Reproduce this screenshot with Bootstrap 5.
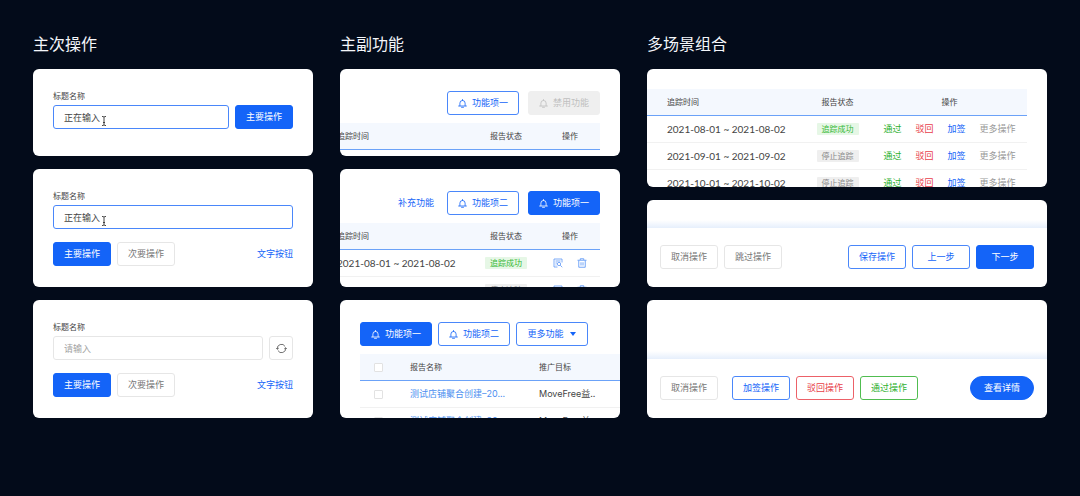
<!DOCTYPE html>
<html lang="zh-CN">
<head>
<meta charset="utf-8">
<meta name="viewport" content="width=device-width, initial-scale=1">
<title>按钮组合</title>
<link rel="stylesheet" href="https://cdn.jsdelivr.net/npm/bootstrap@5.3.0/dist/css/bootstrap.min.css">
<style>
  :root { --blue: #1464f8; --blue-line: #4a87fa; --line: #e6e6e6; --tint: #f4f8fe; }
  body { background: #030b1a; color: #444; font-family: Inter, "Noto Sans CJK SC", sans-serif; font-size: 9px; line-height: 12px; }
  .board { display: grid; grid-template-columns: 7fr 7fr 10fr; gap: 27px; padding: 32px 33px; }
  .board h2 { font-size: 16px; line-height: 24px; font-weight: 400; color: #f4f6fa; margin: 0 0 13px; }
  .stack { display: flex; flex-direction: column; gap: 13px; }
  .board .card { border: 0; border-radius: 6px; overflow: hidden; color: inherit; }
  .tile-s { height: 87px; }
  .tile-l { height: 118px; }
  .form-tile { padding: 21px 20px; }
  .form-tile label { font-size: 8px; line-height: 12px; margin-bottom: 3px; display: block; }
  .form-tile .form-control { height: 24px; min-height: 24px; padding: 0 10px; font-size: 9px; border-color: var(--line); border-radius: 3px; color: #444; }
  .form-tile .form-control::placeholder { color: #a3a3a3; }
  .form-tile .form-control.active { border-color: var(--blue-line); }
  .caret { position: absolute; left: 48px; top: 11px; }
  .gap-6 { gap: 6px; }
  .gap-9 { gap: 9px; }
  .btn { --bs-btn-font-size: 9px; --bs-btn-line-height: 12px; --bs-btn-padding-y: 0; --bs-btn-padding-x: 0; --bs-btn-border-radius: 3px;
    height: 24px; min-width: 58px; flex: none; display: inline-flex; align-items: center; justify-content: center; gap: 5px; }
  .btn-primary { --bs-btn-bg: var(--blue); --bs-btn-border-color: var(--blue); }
  .btn-outline-primary { --bs-btn-color: var(--blue); --bs-btn-border-color: var(--blue-line); }
  .btn-outline-secondary { --bs-btn-color: #777; --bs-btn-border-color: var(--line); }
  .btn-outline-danger { --bs-btn-color: #e8404a; --bs-btn-border-color: #ec6168; }
  .btn-outline-success { --bs-btn-color: #2fb12f; --bs-btn-border-color: #50bd50; }
  .btn-muted { --bs-btn-disabled-color: #bfbfbf; --bs-btn-disabled-bg: #efefef; --bs-btn-disabled-border-color: #efefef; --bs-btn-disabled-opacity: 1; }
  .btn-icon { min-width: 72px; }
  .btn-square { min-width: 24px; width: 24px; }
  .btn-text { min-width: 0; border: 0; color: var(--blue); }
  .btn-pill { min-width: 64px; border-radius: 12px; }
  .toolbar { padding: 22px 20px 8px; }
  .scrolled { display: flex; justify-content: flex-end; padding-right: 20px; }
  .inset-start { padding-left: 20px; }
  .inset-top { padding: 20px 20px 0 0; }
  .grid-table { border-collapse: separate; border-spacing: 0; table-layout: fixed; flex: none; }
  .grid-table th { height: 27px; font-size: 8px; font-weight: 400; background: var(--tint); border-bottom: 1px solid #6ba2f8; padding: 0; }
  .grid-table td { height: 27px; padding: 0; border-bottom: 1px solid #f1f1f1; white-space: nowrap; }
  .grid-table .first-cell { padding-left: 20px; }
  .grid-table .tick-cell { padding-left: 14px; }
  .grid-table .c { text-align: center; }
  .date { font-family: Lato, "Noto Sans CJK SC", sans-serif; font-size: 10px; }
  .tag { display: inline-block; width: 42px; font-size: 8px; line-height: 12px; border-radius: 1px; background: #efefef; color: #888; }
  .tag.ok { background: #e6f7e6; color: #34b834; }
  .ops { display: flex; justify-content: center; gap: 14px; }
  .ops a, .name-link { text-decoration: none; }
  .op-pass { color: #2fb12f; }
  .op-reject { color: #e8404a; }
  .op-sign { color: var(--blue); }
  .op-more { color: #999; }
  .name-link { color: #4c8ff0; }
  .form-check-input.tick { width: 9px; height: 9px; margin: 0; display: block; border: 1px solid #e2e2e2; border-radius: 1px; }
  .act { border: 0; background: none; padding: 0; color: #5d97f6; display: block; }
  .footer-bar { padding: 17px 13px 18px; }
  .fade-band { height: 8px; background: linear-gradient(#fff, #e6effc); }
</style>
</head>
<body>
<svg class="d-none" aria-hidden="true">
  <symbol id="bell" viewBox="0 0 18 18"><path d="M9 1v2M3.8 13.6V8.2a5.2 5.2 0 0 1 10.4 0v5.4M1.2 14h15.6M7 16.6h4" fill="none" stroke="currentColor" stroke-width="1.6" stroke-linecap="round"/></symbol>
  <symbol id="ibeam" viewBox="0 0 6 10"><path d="M1 .5h1.200L3 1.200l.8-.7H5M3 1v8M1 9.500h1.200L3 8.800l.8.7H5M2 6.500h2" fill="none" stroke="#333" stroke-width=".9"/></symbol>
  <symbol id="refresh" viewBox="0 0 20 20"><path d="M2.500 11A7.500 7.500 0 0 1 16.500 6.300M17.500 9A7.500 7.500 0 0 1 3.500 13.700M.3 9l2.200 2.500L5 9.300M15 10.700l2.500-2.200 2.200 2.500" fill="none" stroke="#555" stroke-width="1.5"/></symbol>
  <symbol id="inspect" viewBox="0 0 20 20"><path d="M18 9V2H2v16h7M5 6h10M5 10h3M5 14h2" fill="none" stroke="currentColor" stroke-width="1.600"/><circle cx="12" cy="12" r="3.300" fill="none" stroke="currentColor" stroke-width="1.600"/><path d="M14.500 14.500l4 4" stroke="currentColor" stroke-width="1.600"/></symbol>
  <symbol id="trash" viewBox="0 0 20 20"><path d="M1 4.500h18M6.500 4V1.500h7V4M3.500 5v13.500h13V5M8 8.500v6.500M12 8.500v6.500" fill="none" stroke="currentColor" stroke-width="1.700"/></symbol>
</svg>

<main class="board">
  <section>
    <h2>主次操作</h2>
    <div class="stack">
      <form class="card form-tile tile-s">
        <label for="t1">标题名称</label>
        <div class="d-flex gap-6">
          <div class="position-relative flex-grow-1"><input class="form-control active" id="t1" type="text" value="正在输入"><svg class="caret" width="6" height="10"><use href="#ibeam"/></svg></div>
          <button type="button" class="btn btn-primary">主要操作</button>
        </div>
      </form>
      <form class="card form-tile tile-l">
        <label for="t2">标题名称</label>
        <div class="position-relative"><input class="form-control active" id="t2" type="text" value="正在输入"><svg class="caret" width="6" height="10"><use href="#ibeam"/></svg></div>
        <div class="d-flex gap-6 mt-auto">
          <button type="button" class="btn btn-primary">主要操作</button>
          <button type="button" class="btn btn-outline-secondary">次要操作</button>
          <button type="button" class="btn btn-text ms-auto">文字按钮</button>
        </div>
      </form>
      <form class="card form-tile tile-l">
        <label for="t3">标题名称</label>
        <div class="d-flex gap-6">
          <input class="form-control" id="t3" type="text" placeholder="请输入">
          <button type="button" class="btn btn-outline-secondary btn-square" aria-label="刷新"><svg class="flex-shrink-0" width="11" height="11"><use href="#refresh"/></svg></button>
        </div>
        <div class="d-flex gap-6 mt-auto">
          <button type="button" class="btn btn-primary">主要操作</button>
          <button type="button" class="btn btn-outline-secondary">次要操作</button>
          <button type="button" class="btn btn-text ms-auto">文字按钮</button>
        </div>
      </form>
    </div>
  </section>

  <section>
    <h2>主副功能</h2>
    <div class="stack">
      <div class="card tile-s">
        <div class="toolbar d-flex justify-content-end gap-9">
          <button type="button" class="btn btn-outline-primary btn-icon"><svg width="9" height="9"><use href="#bell"/></svg>功能项一</button>
          <button type="button" class="btn btn-muted btn-icon" disabled><svg width="9" height="9"><use href="#bell"/></svg>禁用功能</button>
        </div>
        <div class="scrolled">
          <table class="grid-table">
            <colgroup><col width="155"><col width="68"><col width="60"></colgroup>
            <thead><tr><th class="first-cell">追踪时间</th><th class="c">报告状态</th><th class="c">操作</th></tr></thead>
          </table>
        </div>
      </div>
      <div class="card tile-l">
        <div class="toolbar d-flex justify-content-end gap-9">
          <button type="button" class="btn btn-text me-1">补充功能</button>
          <button type="button" class="btn btn-outline-primary btn-icon"><svg width="9" height="9"><use href="#bell"/></svg>功能项二</button>
          <button type="button" class="btn btn-primary btn-icon"><svg width="9" height="9"><use href="#bell"/></svg>功能项一</button>
        </div>
        <div class="scrolled">
          <table class="grid-table">
            <colgroup><col width="155"><col width="68"><col width="60"></colgroup>
            <thead><tr><th class="first-cell">追踪时间</th><th class="c">报告状态</th><th class="c">操作</th></tr></thead>
            <tbody>
              <tr><td class="first-cell date">2021-08-01 ~ 2021-08-02</td><td class="c"><span class="tag ok">追踪成功</span></td>
                <td><div class="ops"><button type="button" class="act" aria-label="查看"><svg class="d-block" width="10" height="10"><use href="#inspect"/></svg></button><button type="button" class="act" aria-label="删除"><svg class="d-block" width="10" height="10"><use href="#trash"/></svg></button></div></td></tr>
              <tr><td class="first-cell date">2021-09-01 ~ 2021-09-02</td><td class="c"><span class="tag">停止追踪</span></td>
                <td><div class="ops"><button type="button" class="act" aria-label="查看"><svg class="d-block" width="10" height="10"><use href="#inspect"/></svg></button><button type="button" class="act" aria-label="删除"><svg class="d-block" width="10" height="10"><use href="#trash"/></svg></button></div></td></tr>
            </tbody>
          </table>
        </div>
      </div>
      <div class="card tile-l">
        <div class="toolbar d-flex gap-6">
          <button type="button" class="btn btn-primary btn-icon"><svg width="9" height="9"><use href="#bell"/></svg>功能项一</button>
          <button type="button" class="btn btn-outline-primary btn-icon"><svg width="9" height="9"><use href="#bell"/></svg>功能项二</button>
          <button type="button" class="btn btn-outline-primary btn-icon">更多功能<svg width="8" height="4" viewBox="0 0 8 4"><path d="M1 0h6L4 4z" fill="currentColor"/></svg></button>
        </div>
        <div class="inset-start">
          <table class="grid-table w-100">
            <colgroup><col width="50"><col width="129"><col></colgroup>
            <thead><tr><th class="tick-cell"><input class="tick form-check-input" type="checkbox" aria-label="全选"></th><th>报告名称</th><th>推广目标</th></tr></thead>
            <tbody>
              <tr><td class="tick-cell"><input class="tick form-check-input" type="checkbox" aria-label="选择第一行"></td><td><a class="name-link" href="#">测试店铺聚合创建–20...</a></td><td>MoveFree益..</td></tr>
              <tr><td class="tick-cell"><input class="tick form-check-input" type="checkbox" aria-label="选择第二行"></td><td><a class="name-link" href="#">测试店铺聚合创建–20...</a></td><td>MoveFree益..</td></tr>
            </tbody>
          </table>
        </div>
      </div>
    </div>
  </section>

  <section>
    <h2>多场景组合</h2>
    <div class="stack">
      <div class="card tile-l inset-top">
        <table class="grid-table w-100">
          <colgroup><col><col width="69"><col width="155"></colgroup>
          <thead><tr><th class="first-cell">追踪时间</th><th class="c">报告状态</th><th class="c">操作</th></tr></thead>
          <tbody id="rows"></tbody>
        </table>
      </div>
      <div class="card tile-s justify-content-end">
        <div class="fade-band"></div>
        <div class="footer-bar d-flex gap-6">
          <button type="button" class="btn btn-outline-secondary">取消操作</button>
          <button type="button" class="btn btn-outline-secondary">跳过操作</button>
          <button type="button" class="btn btn-outline-primary ms-auto">保存操作</button>
          <button type="button" class="btn btn-outline-primary">上一步</button>
          <button type="button" class="btn btn-primary">下一步</button>
        </div>
      </div>
      <div class="card tile-l justify-content-end">
        <div class="fade-band"></div>
        <div class="footer-bar d-flex gap-6">
          <button type="button" class="btn btn-outline-secondary me-2">取消操作</button>
          <button type="button" class="btn btn-outline-primary">加签操作</button>
          <button type="button" class="btn btn-outline-danger">驳回操作</button>
          <button type="button" class="btn btn-outline-success">通过操作</button>
          <button type="button" class="btn btn-primary btn-pill ms-auto">查看详情</button>
        </div>
      </div>
    </div>
  </section>
</main>
<script>
  const records = [["08", "ok", "追踪成功"], ["09", "", "停止追踪"], ["10", "", "停止追踪"]];
  document.getElementById("rows").innerHTML = records.map(([m, state, label]) => `
    <tr><td class="first-cell date">2021-${m}-01 ~ 2021-${m}-02</td>
    <td class="c"><span class="tag ${state}">${label}</span></td>
    <td><div class="ops"><a href="#" class="op-pass">通过</a><a href="#" class="op-reject">驳回</a><a href="#" class="op-sign">加签</a><a href="#" class="op-more">更多操作</a></div></td></tr>`).join("");
</script>
<script src="https://cdn.jsdelivr.net/npm/bootstrap@5.3.0/dist/js/bootstrap.bundle.min.js"></script>
</body>
</html>
